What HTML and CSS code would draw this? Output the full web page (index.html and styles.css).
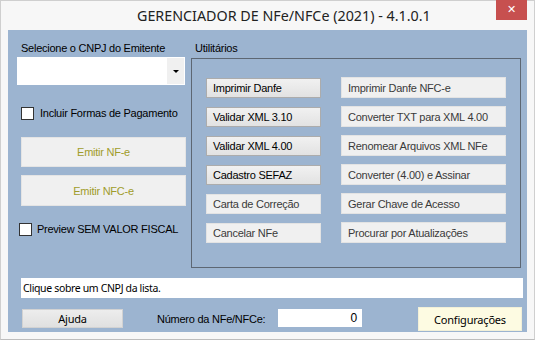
FILE: index.html
```html
<!DOCTYPE html>
<html lang="pt">
<head>
  <meta charset="UTF-8">
  <title>Gerenciador de NFe/NFCe</title>
  <link rel="stylesheet" href="styles.css">
</head>
<body>
  <div class="window">
    <div class="titlebar">
      <span class="title">GERENCIADOR DE NFe/NFCe (2021) - 4.1.0.1</span>
      <span class="close">&#x2715;</span>
    </div>

    <div class="client">
      <div class="top">
        <!-- Emitente -->
        <div class="left">
          <div class="lbl">Selecione o CNPJ do Emitente</div>
          <div class="combo"><span class="combo-btn"><span class="arrow"></span></span></div>
          <div class="check chk1"><span class="box"></span>Incluir Formas de Pagamento</div>
          <button class="emit">Emitir NF-e</button>
          <button class="emit emit2">Emitir NFC-e</button>
          <div class="check chk2"><span class="box"></span>Preview SEM VALOR FISCAL</div>
        </div>

        <!-- Utilitarios -->
        <div class="util">
          <div class="lbl">Utilitários</div>
          <div class="panel">
            <div class="col col1">
              <button class="ubtn on">Imprimir Danfe</button>
              <button class="ubtn on">Validar XML 3.10</button>
              <button class="ubtn on">Validar XML 4.00</button>
              <button class="ubtn on">Cadastro SEFAZ</button>
              <button class="ubtn">Carta de Correção</button>
              <button class="ubtn">Cancelar NFe</button>
            </div>
            <div class="col col2">
              <button class="ubtn">Imprimir Danfe NFC-e</button>
              <button class="ubtn">Converter TXT para XML 4.00</button>
              <button class="ubtn">Renomear Arquivos XML NFe</button>
              <button class="ubtn">Converter (4.00) e Assinar</button>
              <button class="ubtn">Gerar Chave de Acesso</button>
              <button class="ubtn">Procurar por Atualizações</button>
            </div>
          </div>
        </div>
      </div>

      <div class="status">Clique sobre um CNPJ da lista.</div>

      <div class="bottom">
        <button class="ajuda">Ajuda</button>
        <span class="numlbl">Número da NFe/NFCe:</span>
        <div class="numbox">0</div>
        <button class="config">Configurações</button>
      </div>
    </div>
  </div>
</body>
</html>
```

FILE: styles.css
```css
body {
  margin: 0;
  font-family: "Liberation Sans", Arial, sans-serif;
  font-size: 11px;
  letter-spacing: -0.25px;
  color: #000;
  background: #fff;
  white-space: nowrap;
}

.window {
  width: 535px;
  height: 340px;
  box-sizing: border-box;
  background: #f7f7f7;
  border: 1px solid #cfcfcf;
  border-bottom-color: #bdbdbd;
}

.titlebar {
  height: 29px;
  display: flex;
  align-items: flex-start;
}

.title {
  margin-left: 136px;
  margin-top: 5px;
  font-family: "Noto Sans", sans-serif;
  font-size: 14.3px;
  letter-spacing: 0;
  line-height: 20px;
  color: #222;
}

.close {
  margin-left: auto;
  margin-right: 7px;
  margin-top: -1px;
  width: 31px;
  height: 20px;
  background: #c7504f;
  color: #fff;
  font-size: 11px;
  line-height: 20px;
  text-align: center;
  font-family: "DejaVu Sans", sans-serif;
}

.client {
  margin: 0 7px;
  height: 302px;
  background: #9cb4d0;
}

.top {
  display: flex;
  height: 238px;
}

.lbl {
  margin: 12px 0 0 4px;
  line-height: 13px;
  height: 13px;
}

/* left column */
.left {
  width: 183px;
  box-sizing: border-box;
  padding-left: 9px;
}

.combo {
  margin-top: 2px;
  width: 168px;
  height: 28px;
  background: #fff;
  display: flex;
  justify-content: flex-end;
}

.combo-btn {
  width: 17px;
  height: 26px;
  margin: 1px;
  background: #f0f0f0;
  display: flex;
  align-items: center;
  justify-content: center;
}

.arrow {
  width: 0;
  height: 0;
  border-left: 3px solid transparent;
  border-right: 3px solid transparent;
  border-top: 3px solid #000;
  margin-left: 1px;
}

.check {
  display: flex;
  align-items: center;
  line-height: 13px;
}

.box {
  width: 11px;
  height: 11px;
  border: 1px solid #333;
  background: #fff;
}

.chk1 {
  margin: 22px 0 0 4px;
}

.chk1 .box {
  margin-right: 6px;
}

.chk2 {
  margin: 17px 0 0 2px;
}

.chk2 .box {
  margin-right: 5px;
}

button {
  font-family: "Liberation Sans", Arial, sans-serif;
  font-size: 11px;
  letter-spacing: -0.25px;
  padding: 0;
  display: block;
  box-sizing: border-box;
  white-space: nowrap;
  cursor: default;
}

.emit {
  margin: 17px 0 0 4px;
  width: 165px;
  height: 30px;
  background: #f0f0f0;
  border: 1px solid #e4e4e4;
  color: #a09c2b;
}

.emit2 {
  margin-top: 8px;
  height: 31px;
}

/* utilitarios */
.util {
  width: 330px;
}

.panel {
  margin-top: 3px;
  height: 210px;
  box-sizing: border-box;
  border: 1px solid #5d6773;
  padding: 19px 0 0 14px;
  display: flex;
  gap: 20px;
}

.col {
  display: flex;
  flex-direction: column;
}

.col1 {
  width: 115px;
  gap: 9px;
}

.col2 {
  width: 165px;
  gap: 8px;
  margin-top: -1px;
}

.ubtn {
  height: 20px;
  text-align: left;
  padding-left: 6px;
  background: #f0f0f0;
  border: 1px solid #e3e3e3;
  color: #3a3a3a;
}

.col2 .ubtn {
  height: 21px;
}

.ubtn.on {
  background: linear-gradient(#f1f1f1, #e2e2e2);
  border-color: #acacac;
  color: #000;
}

/* bottom */
.status {
  margin: 10px 0 0 13px;
  width: 502px;
  height: 20px;
  box-sizing: border-box;
  background: #fff;
  padding-left: 2px;
  font-family: "Noto Sans", sans-serif;
  font-size: 10.5px;
  letter-spacing: -0.35px;
  line-height: 20px;
}

.bottom {
  display: flex;
  align-items: flex-start;
  margin-top: 9px;
}

.ajuda {
  margin: 2px 0 0 14px;
  width: 101px;
  height: 19px;
  background: linear-gradient(#ededed, #e0e0e0);
  border: 1px solid #d2d2d2;
  font-family: "Noto Sans", sans-serif;
  font-size: 11px;
  letter-spacing: -0.2px;
}

.numlbl {
  margin: 6px 0 0 34px;
  width: 121px;
  line-height: 13px;
}

.numbox {
  margin-top: 2px;
  width: 84px;
  height: 18px;
  box-sizing: border-box;
  background: #fff;
  text-align: right;
  padding-right: 5px;
  font-size: 12px;
  line-height: 18px;
}

.config {
  margin-left: 56px;
  width: 104px;
  height: 24px;
  background: #fdfbe2;
  border: 1px solid #f2f0d8;
  font-family: "Noto Sans", sans-serif;
  font-size: 11px;
  letter-spacing: -0.2px;
}
```
